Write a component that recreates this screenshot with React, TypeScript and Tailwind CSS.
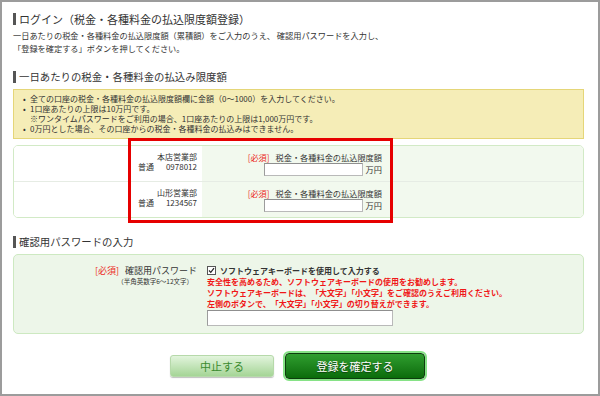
import React from "react";

const Req = ({ cls = "" }: { cls?: string }) => (
  <span className={`text-[#ec2a1c] ${cls}`}>[必須]</span>
);

const Heading = ({ children, cls = "" }: { children: React.ReactNode; cls?: string }) => (
  <div className={`flex items-center h-[14px] ${cls}`}>
    <span className="w-[3px] h-[12px] bg-[#555] mr-[3px] shrink-0" />
    <span className="leading-[14px] text-[#333]">{children}</span>
  </div>
);

const Input = ({ cls = "" }: { cls?: string }) => (
  <span
    className={`block bg-white border border-[#b9b9b9] border-t-[#8f8f8f] border-l-[#9c9c9c] ${cls}`}
  />
);

const AccountRow = ({ branch, num, last }: { branch: string; num: string; last?: boolean }) => (
  <div className={`flex ${last ? "" : "border-b border-[#e6ece4]"}`}>
    <div className="w-[188px] bg-white pt-[6px] pb-[5px] pr-[5px] text-right text-[8px] leading-[10px]">
      <div>{branch}</div>
      <div className="flex justify-end gap-[12px]">
        <span>普通</span>
        <span>{num}</span>
      </div>
    </div>
    <div className="flex-1 bg-[#f2f9ee] pt-[6px] pb-[5px]">
      <div className="w-[180px] flex flex-col items-end text-[8.2px] leading-[10px]">
        <div>
          <Req cls="mr-[6px]" />
          税金・各種料金の払込限度額
        </div>
        <div className="flex items-center mt-[1px]">
          <Input cls="w-[99px] h-[13px]" />
          <span className="ml-[3px] leading-[13px]">万円</span>
        </div>
      </div>
    </div>
  </div>
);

export default function App() {
  return (
    <div className="w-[600px] h-[396px] border-2 border-[#9c9c9c] bg-white relative text-[#333] font-['Noto_Sans_CJK_JP','Noto_Sans',sans-serif] pl-[11px] pr-[14px] pt-[10px]">
      <Heading cls="text-[11px]">ログイン（税金・各種料金の払込限度額登録）</Heading>
      <div className="mt-[2.5px] text-[8.2px] leading-[13px]">
        一日あたりの税金・各種料金の払込限度額（累積額）をご入力のうえ、 確認用パスワードを入力し、
        <br />
        「登録を確定する」ボタンを押してください。
      </div>

      <Heading cls="text-[10.4px] mt-[15.5px]">一日あたりの税金・各種料金の払込み限度額</Heading>

      <div className="mt-[5px] bg-[#f5edb7] border border-[#e5d678] pt-[4px] pb-[4px] pl-[9px] text-[8px] leading-[10px]">
        <div className="flex">
          <span className="w-[7px]">•</span>
          <span>全ての口座の税金・各種料金の払込限度額欄に金額（0〜1000）を入力してください。</span>
        </div>
        <div className="flex">
          <span className="w-[7px]">•</span>
          <span>1口座あたりの上限は10万円です。</span>
        </div>
        <div className="pl-[7px]">※ワンタイムパスワードをご利用の場合、1口座あたりの上限は1,000万円です。</div>
        <div className="flex">
          <span className="w-[7px]">•</span>
          <span>0万円とした場合、その口座からの税金・各種料金の払込みはできません。</span>
        </div>
      </div>

      <div className="mt-[6px] border border-[#d2eac6] rounded-[5px] overflow-hidden">
        <AccountRow branch="本店営業部" num="0978012" />
        <AccountRow branch="山形営業部" num="1234567" last />
      </div>

      <Heading cls="text-[10.4px] mt-[17px]">確認用パスワードの入力</Heading>

      <div className="mt-[5px] h-[80px] bg-[#edf6e9] border border-[#cde9c1] rounded-[5px] flex pt-[10px]">
        <div className="w-[183px] text-right">
          <div className="text-[9px] leading-[12px]">
            <Req cls="mr-[6px]" />
            確認用パスワード
          </div>
          <div className="text-[6.5px] leading-[9px] pr-[4px]">（半角英数字6〜12文字）</div>
        </div>
        <div className="ml-[10px] text-[8px] leading-[11px]">
          <div className="flex items-center font-bold">
            <svg width="9" height="9" viewBox="0 0 9 9" className="mr-[4px]">
              <rect x="0.5" y="0.5" width="8" height="8" fill="#fff" stroke="#555" />
              <path d="M2 4.5 L3.8 6.4 L7 2.2" fill="none" stroke="#222" strokeWidth="1.2" />
            </svg>
            ソフトウェアキーボードを使用して入力する
          </div>
          <div className="text-[#f01818] font-bold">
            <div>安全性を高めるため、ソフトウェアキーボードの使用をお勧めします。</div>
            <div>ソフトウェアキーボードは、「大文字」「小文字」をご確認のうえご利用ください。</div>
            <div>左側のボタンで、「大文字」「小文字」の切り替えができます。</div>
          </div>
          <Input cls="mt-[1px] w-[186px] h-[16px]" />
        </div>
      </div>

      <div className="mt-[17px] flex justify-center items-center gap-[9px]">
        <div className="w-[104px] h-[22px] rounded-[3px] border border-[#b6d9aa] bg-gradient-to-b from-[#e2f4dc] to-[#a5d596] shadow-[0_1px_1px_rgba(0,0,0,0.25)] flex items-center justify-center text-[11px] text-[#3a8a2e]">
          中止する
        </div>
        <div className="w-[144px] h-[30px] rounded-[6px] border-2 border-[#86e286] bg-white">
          <div className="w-full h-full rounded-[4px] border border-[#0d3d0d] bg-gradient-to-b from-[#2f9e2f] to-[#0a6c0a] flex items-center justify-center text-[11px] text-white [text-shadow:0_1px_1px_rgba(0,0,0,0.5)]">
            登録を確定する
          </div>
        </div>
      </div>

      <div className="absolute left-[126px] top-[136px] w-[265px] h-[85px] border-[3px] border-[#e60000] pointer-events-none" />
    </div>
  );
}
